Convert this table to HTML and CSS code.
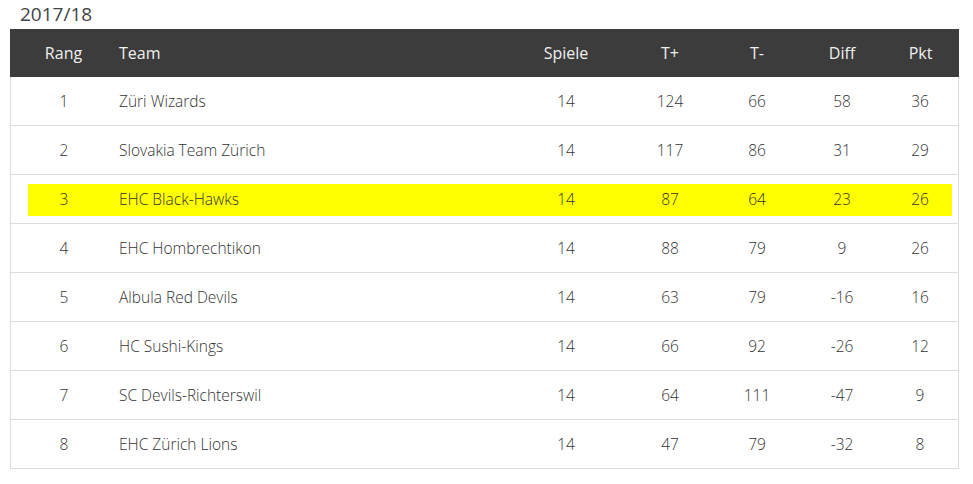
FILE: index.html
```html
<!DOCTYPE html>
<html lang="de">
<head>
<meta charset="utf-8">
<title>Tabelle 2017/18</title>
<link rel="stylesheet" href="styles.css">
</head>
<body>
<div class="page">
  <h2 class="season">2017/18</h2>
  <div class="table">
    <div class="row head">
      <div class="c num">Rang</div><div class="c team">Team</div><div class="c num">Spiele</div><div class="c num">T+</div><div class="c num">T-</div><div class="c num">Diff</div><div class="c num">Pkt</div>
    </div>
    <div class="row"><div class="cells">
      <div class="c num">1</div><div class="c team">Züri Wizards</div><div class="c num">14</div><div class="c num">124</div><div class="c num">66</div><div class="c num">58</div><div class="c num">36</div>
    </div></div>
    <div class="row"><div class="cells">
      <div class="c num">2</div><div class="c team">Slovakia Team Zürich</div><div class="c num">14</div><div class="c num">117</div><div class="c num">86</div><div class="c num">31</div><div class="c num">29</div>
    </div></div>
    <div class="row"><div class="cells hl">
      <div class="c num">3</div><div class="c team">EHC Black-Hawks</div><div class="c num">14</div><div class="c num">87</div><div class="c num">64</div><div class="c num">23</div><div class="c num">26</div>
    </div></div>
    <div class="row"><div class="cells">
      <div class="c num">4</div><div class="c team">EHC Hombrechtikon</div><div class="c num">14</div><div class="c num">88</div><div class="c num">79</div><div class="c num">9</div><div class="c num">26</div>
    </div></div>
    <div class="row"><div class="cells">
      <div class="c num">5</div><div class="c team">Albula Red Devils</div><div class="c num">14</div><div class="c num">63</div><div class="c num">79</div><div class="c num">-16</div><div class="c num">16</div>
    </div></div>
    <div class="row"><div class="cells">
      <div class="c num">6</div><div class="c team">HC Sushi-Kings</div><div class="c num">14</div><div class="c num">66</div><div class="c num">92</div><div class="c num">-26</div><div class="c num">12</div>
    </div></div>
    <div class="row"><div class="cells">
      <div class="c num">7</div><div class="c team">SC Devils-Richterswil</div><div class="c num">14</div><div class="c num">64</div><div class="c num">111</div><div class="c num">-47</div><div class="c num">9</div>
    </div></div>
    <div class="row"><div class="cells">
      <div class="c num">8</div><div class="c team">EHC Zürich Lions</div><div class="c num">14</div><div class="c num">47</div><div class="c num">79</div><div class="c num">-32</div><div class="c num">8</div>
    </div></div>
  </div>
</div>
</body>
</html>
```
FILE: styles.css
```css
* { box-sizing: border-box; }
html, body { margin: 0; padding: 0; }
html { background: #fff; }
body {
  font-family: "Open Sans", "Liberation Sans", sans-serif;
  font-weight: 300;
  color: #333;
}
.page { padding: 0 14px 0 10px; }
.season {
  margin: 0;
  padding: 4px 0 0 10px;
  height: 29px;
  font-size: 19px;
  font-weight: 400;
  color: #444;
  line-height: 20px;
}
.table {
  width: 949px;
  border: 1px solid #ddd;
  border-top: 0;
}
.row, .cells {
  display: grid;
  grid-template-columns: 106px 387px 124px 84px 90px 80px 76px;
  align-items: center;
}
.row { display: block; height: 49px; border-bottom: 1px solid #ddd; padding: 0; }
.row:last-child { border-bottom: 0; height: 48px; }
.cells { height: 48px; font-size: 15.5px; }
.row.head {
  display: grid;
  height: 48px;
  margin: 0 -1px;
  width: 949px;
  grid-template-columns: 107px 387px 124px 84px 90px 80px 77px;
  background: #3c3c3c;
  color: #f0f0f0;
  font-size: 16px;
  font-weight: 400;
  border-bottom: 0;
}
.c { white-space: nowrap; }
.num { text-align: center; }
.team { padding-left: 2px; }
.hl { position: relative; isolation: isolate; }
.hl::before {
  content: "";
  position: absolute;
  left: 17px; right: 6px; top: 9px; bottom: 7px;
  background: #ffff00;
  z-index: -1;
}
```
